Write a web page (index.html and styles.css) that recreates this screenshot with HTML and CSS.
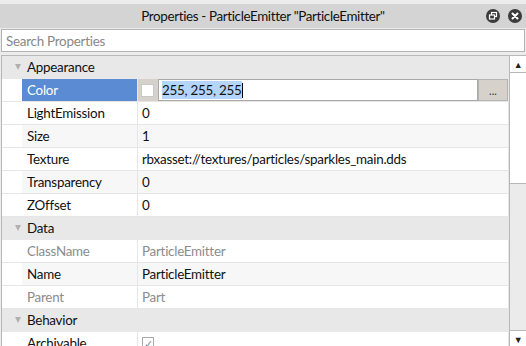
FILE: index.html
```html
<!DOCTYPE html>
<html lang="en">
<head>
  <meta charset="UTF-8">
  <title>Properties</title>
  <link rel="stylesheet" href="styles.css">
</head>
<body>

<div class="titlebar">
  <span></span>
  <span class="title">Properties - ParticleEmitter "ParticleEmitter"</span>
  <span class="title-btns">
    <svg width="14" height="14" viewBox="0 0 14 14">
      <circle cx="7" cy="7" r="7" fill="#3b3b3b"/>
      <rect x="5.5" y="3.5" width="5" height="4" fill="none" stroke="#fff" stroke-width="1.2"/>
      <rect x="3.5" y="6" width="5" height="4" fill="#3b3b3b" stroke="#fff" stroke-width="1.2"/>
    </svg>
    <svg width="14" height="14" viewBox="0 0 14 14">
      <circle cx="7" cy="7" r="7" fill="#3b3b3b"/>
      <path d="M4.5 4.5 L9.5 9.5 M9.5 4.5 L4.5 9.5" stroke="#fff" stroke-width="2" stroke-linecap="round"/>
    </svg>
  </span>
</div>

<div class="search">
  <input type="text" placeholder="Search Properties">
</div>

<div class="panel">
  <div class="rows">
    <div class="row group"><span class="arrow"></span><span class="group-name">Appearance</span></div>

    <div class="row alt">
      <span class="gutter"></span>
      <span class="name selected">Color</span>
      <span class="value color-edit">
        <span class="swatch"><span class="swatch-box"></span></span>
        <span class="color-input"><span class="sel">255, 255, 255</span><span class="caret"></span></span>
        <span class="more">...</span>
      </span>
    </div>
    <div class="row"><span class="gutter"></span><span class="name">LightEmission</span><span class="value">0</span></div>
    <div class="row alt"><span class="gutter"></span><span class="name">Size</span><span class="value">1</span></div>
    <div class="row"><span class="gutter"></span><span class="name">Texture</span><span class="value">rbxasset://textures/particles/sparkles_main.dds</span></div>
    <div class="row alt"><span class="gutter"></span><span class="name">Transparency</span><span class="value">0</span></div>
    <div class="row"><span class="gutter"></span><span class="name">ZOffset</span><span class="value">0</span></div>

    <div class="row group"><span class="arrow"></span><span class="group-name">Data</span></div>
    <div class="row"><span class="gutter"></span><span class="name muted">ClassName</span><span class="value muted">ParticleEmitter</span></div>
    <div class="row alt"><span class="gutter"></span><span class="name">Name</span><span class="value">ParticleEmitter</span></div>
    <div class="row"><span class="gutter"></span><span class="name muted">Parent</span><span class="value muted">Part</span></div>

    <div class="row group"><span class="arrow"></span><span class="group-name">Behavior</span></div>
    <div class="row"><span class="gutter"></span><span class="name">Archivable</span><span class="value"><span class="checkbox">&#10003;</span></span></div>
  </div>

  <div class="scrollbar">
    <div class="sb-btn">&#9650;</div>
    <div class="sb-thumb"></div>
    <div class="sb-track"></div>
    <div class="sb-btn down">&#9660;</div>
  </div>
</div>

</body>
</html>
```

FILE: styles.css
```css
* {
  box-sizing: border-box;
}

body {
  margin: 0;
  padding-top: 4px;
  background: #ececec;
  font-family: Lato, "Liberation Sans", sans-serif;
  font-size: 13.4px;
  letter-spacing: -0.25px;
  color: #111;
  height: 346px;
  overflow: hidden;
}

.titlebar {
  height: 24px;
  background: #d4d4d4;
  display: grid;
  grid-template-columns: 1fr auto 1fr;
  align-items: center;
}

.title {
  color: #111;
  letter-spacing: -0.35px;
}

.title-btns {
  justify-self: end;
  display: flex;
  gap: 8px;
  padding-right: 4px;
}

.title-btns svg {
  display: block;
}

.search {
  padding: 1px 1px 0 1px;
}

.search input {
  display: block;
  width: 100%;
  height: 23px;
  border: 1px solid #b4b4b4;
  padding: 0 4px;
  font-family: inherit;
  font-size: 13.4px;
  letter-spacing: -0.25px;
  outline: none;
}

.search input::placeholder {
  color: #888;
}

.panel {
  margin: 3px 0 0 1px;
  border-top: 1px solid #b8b8b8;
  border-left: 1px solid #b8b8b8;
  display: flex;
  height: 292px;
  overflow: hidden;
}

.rows {
  flex: 1;
  background: #fff;
}

.row {
  display: grid;
  grid-template-columns: 20px 116px 1fr;
  height: 23px;
  border-bottom: 1px solid #e6e6e6;
  align-items: stretch;
}

.row.alt {
  background: #f7f7f7;
}

.row.group {
  display: flex;
  align-items: center;
  background: #e8e8e8;
  border-bottom-color: #e8e8e8;
}

.arrow {
  width: 0;
  height: 0;
  margin: 0 6px 0 13px;
  border-left: 3px solid transparent;
  border-right: 3px solid transparent;
  border-top: 6px solid #b0b0b0;
}

.gutter {
  background: #fff;
}

.name {
  display: flex;
  align-items: center;
  padding-left: 5px;
  border-right: 1px solid #e6e6e6;
}

.name.selected {
  background: #5b8bd2;
  color: #fff;
}

.value {
  display: flex;
  align-items: center;
  padding-left: 4px;
  border-right: 1px solid #e6e6e6;
  white-space: nowrap;
  overflow: hidden;
}

.muted {
  color: #8c8c8c;
}

.color-edit {
  padding-left: 0;
  align-items: stretch;
  background: #fff;
}

.swatch {
  width: 20px;
  background: #d6d2cb;
  display: flex;
  align-items: center;
  padding-left: 3px;
}

.swatch-box {
  width: 13px;
  height: 13px;
  background: #fff;
  border: 1px solid #c8c8c8;
}

.color-input {
  flex: 1;
  border: 1px solid #a9a9a9;
  background: #fff;
  display: flex;
  align-items: center;
  padding-left: 3px;
}

.sel {
  background: #b4d6fc;
  padding: 1px 0;
}

.caret {
  width: 1px;
  height: 15px;
  background: #000;
}

.more {
  width: 30px;
  background: #d6d2cb;
  border: 1px solid #b4b4b4;
  color: #333;
  font-size: 11px;
  letter-spacing: 0;
  display: flex;
  align-items: center;
  justify-content: center;
}

.checkbox {
  width: 12px;
  height: 12px;
  border: 1px solid #aaa;
  font-size: 11px;
  line-height: 11px;
  letter-spacing: 0;
  color: #888;
  text-align: center;
  background: #fff;
}

.scrollbar {
  width: 17px;
  border-left: 1px solid #b8b8b8;
  display: flex;
  flex-direction: column;
  background: #fff;
}

.sb-btn {
  height: 17px;
  font-size: 9px;
  color: #222;
  display: flex;
  align-items: center;
  justify-content: center;
  border-bottom: 1px solid #b8b8b8;
  background: #fff;
}

.sb-btn.down {
  border-bottom: none;
  border-top: 1px solid #b8b8b8;
}

.sb-thumb {
  height: 111px;
  background: #fff;
  border-bottom: 1px solid #b8b8b8;
}

.sb-track {
  flex: 1;
  background: #ebebeb;
}
```
